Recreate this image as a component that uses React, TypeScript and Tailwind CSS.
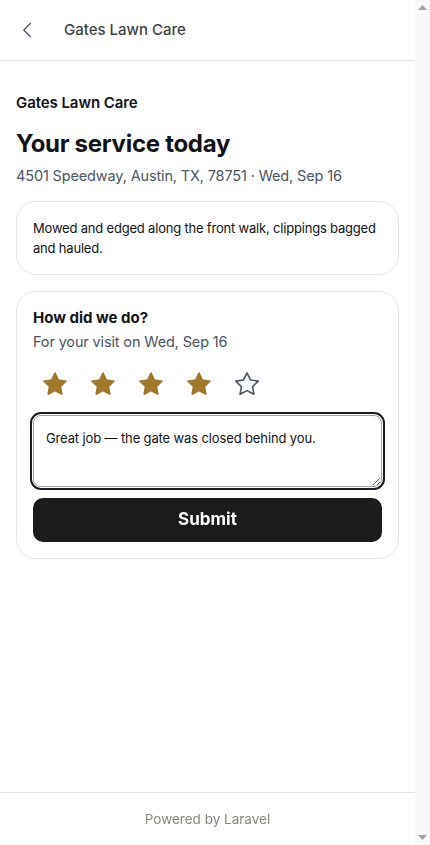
import { useState } from "react";

const FONT = "font-['Inter',_'Liberation_Sans',_sans-serif]";

function Star({ filled }: { filled: boolean }) {
  return (
    <svg width="28" height="28" viewBox="0 0 24 24" aria-hidden="true">
      <path
        d="M12 2.5l3 6.05 6.6.95-4.8 4.7 1.15 6.6L12 17.7l-5.95 3.1 1.15-6.6-4.8-4.7 6.6-.95L12 2.5z"
        fill={filled ? "#a07a2c" : "none"}
        stroke={filled ? "#a07a2c" : "#4b5563"}
        strokeWidth={filled ? 1.2 : 1.4}
        strokeLinejoin="round"
      />
    </svg>
  );
}

// fake classic scrollbar gutter (the reference was taken with one)
function ScrollGutter() {
  return (
    <div className="flex h-screen w-[15px] shrink-0 flex-col items-center justify-between bg-[#f9f9f9] py-[5px]">
      <svg width="9" height="5" viewBox="0 0 9 5">
        <path d="M4.5 0L9 5H0z" fill="#a3a3a3" />
      </svg>
      <svg width="9" height="5" viewBox="0 0 9 5">
        <path d="M0 0h9L4.5 5z" fill="#a3a3a3" />
      </svg>
    </div>
  );
}

export default function App() {
  const [rating, setRating] = useState(4);
  const [note, setNote] = useState("Great job — the gate was closed behind you.");

  return (
    <div className={`${FONT} flex h-screen overflow-hidden bg-white text-[#111318]`}>
      <div className="w-[415px] shrink-0">
        {/* Header */}
        <header className="flex h-[61px] items-center border-b border-[#e4e4e2] px-4">
          <button className="flex h-6 w-6 items-center justify-center text-[#4b5563]" aria-label="Back">
            <svg width="20" height="20" viewBox="0 0 24 24" fill="none" stroke="currentColor" strokeWidth="1.6" strokeLinecap="round" strokeLinejoin="round">
              <path d="M15 4l-8 8 8 8" />
            </svg>
          </button>
          <span className="ml-[24px] text-[15px] font-medium text-[#3f3f46]">Gates Lawn Care</span>
        </header>

        {/* Main */}
        <main className="h-[731px] px-4 pt-[32px]">
          <p className="text-[15px] font-semibold leading-5 tracking-[-0.005em]">Gates Lawn Care</p>
          <h1 className="mt-[16px] text-[24px] font-bold leading-[30px] tracking-[-0.012em]">Your service today</h1>
          <p className="mt-[5px] text-[14.5px] leading-6 tracking-[-0.01em] text-[#4b5563]">
            4501 Speedway, Austin, TX, 78751 · Wed, Sep 16
          </p>

          <div className="mt-[13px] rounded-[20px] border border-[#e2e5e9] px-4 py-4">
            <p className="text-[13px] leading-5 tracking-[-0.015em]">
              Mowed and edged along the front walk, clippings bagged and hauled.
            </p>
          </div>

          <div className="mt-[16px] rounded-[20px] border border-[#e2e5e9] px-4 pt-[16px] pb-4">
            <p className="text-[15px] font-bold leading-5">How did we do?</p>
            <p className="mt-[2px] text-[14.5px] leading-6 tracking-[-0.01em] text-[#4b5563]">For your visit on Wed, Sep 16</p>

            <div className="mt-[16px] flex gap-[20px] pl-[8px]">
              {[1, 2, 3, 4, 5].map((n) => (
                <button key={n} onClick={() => setRating(n)} aria-label={`${n} stars`}>
                  <Star filled={n <= rating} />
                </button>
              ))}
            </div>

            <textarea
              autoFocus
              value={note}
              onChange={(e) => setNote(e.target.value)}
              onFocus={(e) => {
                const len = e.currentTarget.value.length;
                e.currentTarget.setSelectionRange(len, len);
              }}
              className="mt-[17px] block h-[72px] w-full resize-y rounded-[8px] border border-[#9ca3af] px-3 py-[12px] text-[13px] leading-5 tracking-[-0.01em] text-[#111318] outline-2 outline-offset-[1px] outline-[#1c1c1e]"
            />

            <button className="mt-[11px] h-[44px] w-full rounded-[10px] bg-[#1b1b1d] text-[17px] font-bold text-white">
              Submit
            </button>
          </div>
        </main>

        {/* Footer */}
        <footer className="border-t border-[#e4e4e2] pt-4 pb-8 text-center text-[13.5px] leading-5 text-[#8a8780]">
          Powered by Laravel
        </footer>
      </div>
      <ScrollGutter />
    </div>
  );
}
